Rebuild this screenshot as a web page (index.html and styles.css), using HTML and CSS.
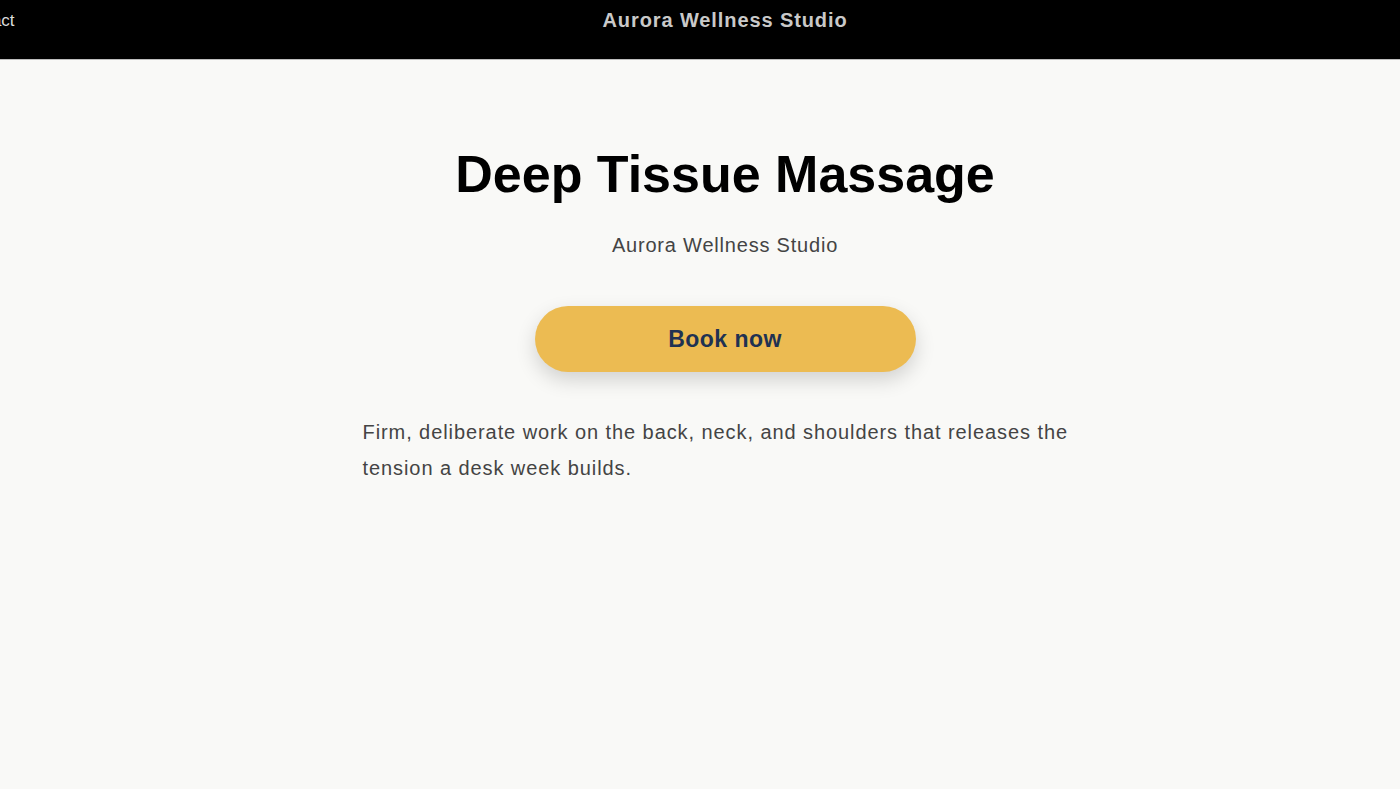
FILE: index.html
```html
<!DOCTYPE html>
<html lang="en">
<head>
<meta charset="utf-8">
<title>Deep Tissue Massage — Aurora Wellness Studio</title>
<link rel="stylesheet" href="styles.css">
</head>
<body>
<header class="topbar">
  <nav class="nav"><a class="nav-link" href="#">Contact</a></nav>
  <div class="brand">Aurora Wellness Studio</div>
</header>
<main class="page">
  <section class="hero">
    <h1 class="title">Deep Tissue Massage</h1>
    <p class="studio">Aurora Wellness Studio</p>
    <a class="cta" href="#">Book now</a>
    <p class="desc">Firm, deliberate work on the back, neck, and shoulders that releases the tension a desk week builds.</p>
  </section>
</main>
</body>
</html>
```
FILE: styles.css
```css
* { box-sizing: border-box; }
html, body { margin: 0; padding: 0; }
body {
  background: #f9f9f7;
  font-family: "Liberation Sans", Arial, Helvetica, sans-serif;
  color: #111;
  overflow: hidden;
}
.topbar {
  height: 60px;
  background: #000;
  border-bottom: 1px solid #bdbdbd;
  position: relative;
  display: flex;
  justify-content: center;
  padding-left: 50px;
}
.nav {
  position: absolute;
  left: -44px;
  top: 11px;
}
.nav-link {
  color: #dcdcdc;
  text-decoration: none;
  font-size: 17px;
}
.brand {
  color: #c9c9c9;
  font-weight: 700;
  font-size: 20px;
  letter-spacing: 0.045em;
  padding-top: 9px;
}
.page {
  padding-left: 50px;
}
.hero {
  display: flex;
  flex-direction: column;
  align-items: center;
  padding-top: 83px;
}
.title {
  margin: 0;
  font-size: 52px;
  font-weight: 700;
  color: #000;
  line-height: 1.2;
}
.studio {
  margin: 29px 0 0;
  font-size: 20px;
  letter-spacing: 0.04em;
  color: #444;
}
.cta {
  margin-top: 49px;
  width: 381px;
  height: 66px;
  border-radius: 33px;
  background: #ecbb52;
  color: #1f3252;
  font-weight: 700;
  font-size: 23px;
  letter-spacing: 0.02em;
  text-decoration: none;
  display: flex;
  align-items: center;
  justify-content: center;
  box-shadow: 0 8px 20px rgba(0, 0, 0, 0.16);
}
.desc {
  width: 725px;
  margin: 42px 0 0;
  font-size: 20px;
  line-height: 36px;
  letter-spacing: 0.046em;
  color: #444;
}
```
